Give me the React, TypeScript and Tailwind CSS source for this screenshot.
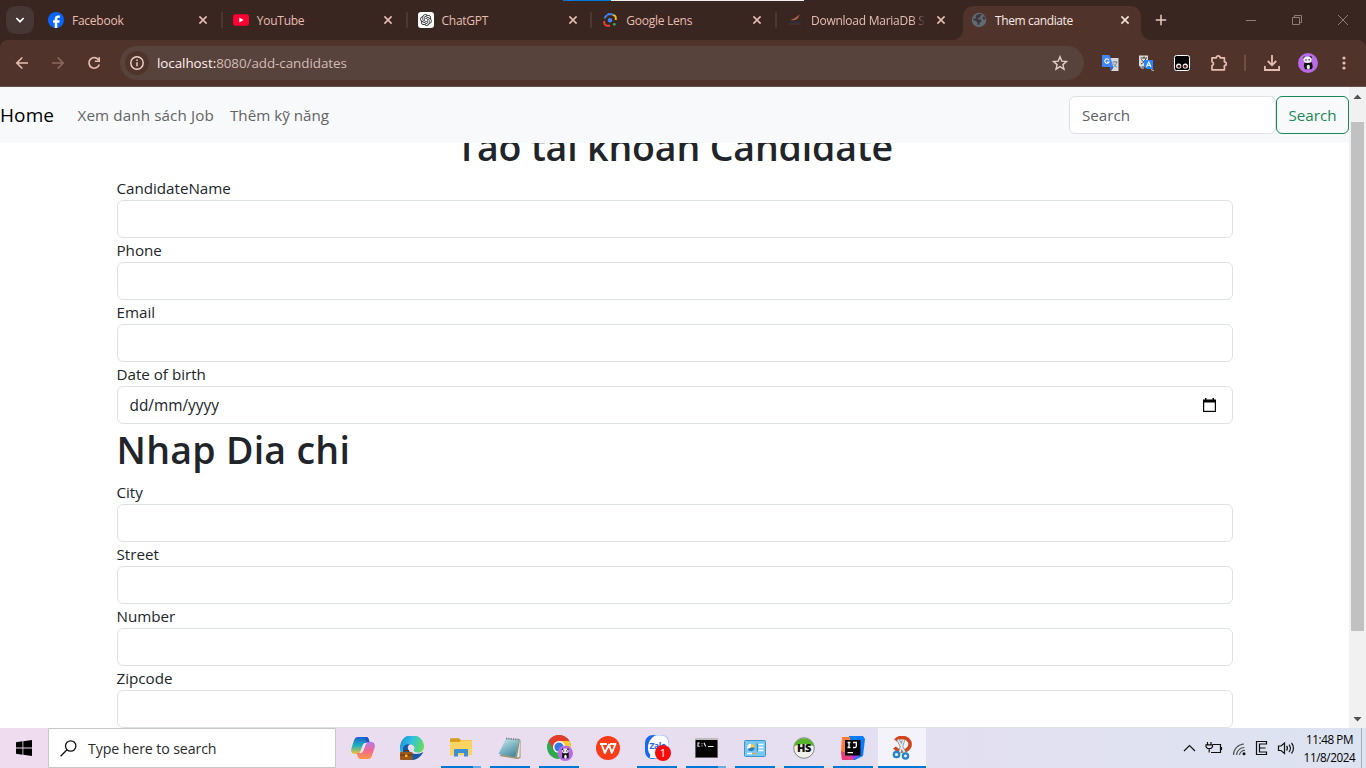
import type { ReactNode } from "react";
import { RiOpenaiFill } from "react-icons/ri";

/* ---------- Favicons ---------- */

const FacebookIcon = () => (
  <svg width="16" height="16" viewBox="0 0 16 16">
    <circle cx="8" cy="8" r="8" fill="#0866ff" />
    <path d="M6.700 16v-5.300H5V8.300h1.700V7.200c0-2.600 1.200-3.800 3.700-3.800.5 0 1.200.1 1.500.2v2.100c-.2 0-.5 0-.9 0-1.200 0-1.700.5-1.700 1.700v.9h2.400l-.4 2.400h-2V16z" fill="#fff" />
  </svg>
);

const YouTubeIcon = () => (
  <svg width="16" height="16" viewBox="0 0 16 16">
    <rect y="2.300" width="16" height="11.400" rx="2.600" fill="#ff0033" />
    <path d="M6.300 5.600v4.800L10.600 8z" fill="#fff" />
  </svg>
);

const ChatGptIcon = () => (
  <div className="flex h-4 w-4 items-center justify-center rounded-[3px] bg-white text-[#222]">
    <RiOpenaiFill size={14} />
  </div>
);

const LensIcon = () => (
  <svg width="14" height="14" viewBox="0 0 14 14" fill="none" strokeWidth="1.900">
    <path d="M1.800 5.500A3.500 3.500 0 0 1 4 2.300" stroke="#4285f4" />
    <path d="M4.200 2.200L5.300 1.200h3.500l1.200 1" stroke="#4285f4" />
    <path d="M10 2.100A3 3 0 0 1 12.800 5v2" stroke="#fbbc04" />
    <path d="M1.200 8v1.500A3.300 3.300 0 0 0 4.500 12.800H7" stroke="#ea4335" />
    <circle cx="7" cy="7.200" r="2.200" fill="#4285f4" />
    <circle cx="11.300" cy="11.300" r="1.400" fill="#34a853" />
  </svg>
);

const MariaIcon = () => (
  <svg width="14" height="14" viewBox="0 0 14 14">
    <path d="M2 7.200l4-1.600L9 3.500l2.800-2.300-1.600 3.500-1.700 1.900-2 .3-1 .9-.3-.9z" fill="#b5604c" />
    <path d="M1 8.300h11.500l-1 1.600H2.500z" fill="#2b2c40" />
    <path d="M.5 11h13" stroke="#55332f" strokeWidth="1" />
  </svg>
);

const GlobeIcon = () => (
  <svg width="16" height="16" viewBox="0 0 16 16">
    <circle cx="8" cy="8" r="7.200" fill="#5f6a73" />
    <path d="M8.300 1.800l2.500.6-.7 1.500-1.300.8-.4 1.300H6.500l.8 1.200 2.300.2 1 1.500-.9 1.400-1.200.8-.4 1.900-1.600-.3.1-2-1.400-1.500-2.900-1.300.1-1.600 1.700.4 1-.8-.5-1.300.8-1.500 1.500-.6z" fill="#40353a" />
    <path d="M11.500 5l1.800-.5 1 2-.8 1.200-1.700-.5z" fill="#40353a" />
  </svg>
);

const Close = ({ bright = false }: { bright?: boolean }) => (
  <svg width="10" height="10" viewBox="0 0 10 10" className="shrink-0">
    <path d="M1.400 1.400l7.200 7.200M8.600 1.400L1.400 8.600" stroke={bright ? "#f7e2dc" : "#e7bdb2"} strokeWidth="1.600" />
  </svg>
);

/* ---------- Browser chrome ---------- */

type TabData = { title: string; icon: ReactNode };

const tabs: TabData[] = [
  { title: "Facebook", icon: <FacebookIcon /> },
  { title: "YouTube", icon: <YouTubeIcon /> },
  { title: "ChatGPT", icon: <ChatGptIcon /> },
  { title: "Google Lens", icon: <LensIcon /> },
  { title: "Download MariaDB S", icon: <MariaIcon /> },
];

function TabStrip() {
  return (
    <div className="relative flex h-10 bg-[#392621] text-[12px] tracking-[-0.250px] text-[#e7bdb2]">
      <div className="absolute left-[563px] top-0 flex h-px w-[241px] bg-[#f0eeee]">
        <div className="w-12 bg-[#0078d7]" />
      </div>
      <div className="ml-1.5 mt-1.5 flex h-7 w-7 shrink-0 items-center justify-center rounded-[9px] bg-[#463734]">
        <svg width="10" height="8" viewBox="0 0 10 8">
          <path d="M1.300 2L5 5.700 8.700 2" fill="none" stroke="#fff" strokeWidth="1.700" />
        </svg>
      </div>
      <div className="ml-1 flex w-[924.500px]">
        {tabs.map((t, i) => (
          <div key={t.title} className="flex h-10 w-[184.750px] shrink-0 items-center pl-[10px]">
            <div className="flex w-4 shrink-0 justify-center">{t.icon}</div>
            <div
              className={
                i === 4
                  ? "ml-2 w-[117px] whitespace-nowrap pt-0.5 [mask-image:linear-gradient(to_right,black_86%,transparent_98%)]"
                  : "ml-2 w-[126px] whitespace-nowrap pt-0.5"
              }
            >
              {t.title}
            </div>
            <div className={i === 4 ? "ml-[8px] flex" : "flex"}>
              <Close />
            </div>
            {i < 4 && <div className="ml-auto h-4 w-0.5 bg-[#4a3835]" />}
          </div>
        ))}
      </div>
      <div className="relative ml-[0.500px] mt-1.5 flex h-[34px] w-[178px] items-center rounded-t-[10px] bg-[#50342c] pl-2 text-[#fbe9e4]">
        <svg width="10" height="10" className="absolute -left-[10px] bottom-0">
          <path d="M10 0v10H0A10 10 0 0 0 10 0" fill="#50342c" />
        </svg>
        <svg width="10" height="10" className="absolute -right-[10px] bottom-0">
          <path d="M0 0v10h10A10 10 0 0 1 0 0" fill="#50342c" />
        </svg>
        <div className="-mt-1.5"><GlobeIcon /></div>
        <div className="-mt-1 ml-2 w-[125px] tracking-[-0.380px]">Them candiate</div>
        <div className="-mt-1.5 flex"><Close bright /></div>
      </div>
      <svg width="12" height="12" viewBox="0 0 12 12" className="ml-[14px] mt-[14px]">
        <path d="M6 .8v10.400M.8 6h10.400" stroke="#e9cbc3" strokeWidth="1.500" />
      </svg>
      <div className="ml-auto mr-[18px] flex h-10 items-center gap-[36px]">
        <svg width="10" height="10"><path d="M0 5.500h10" stroke="#8e7c78" /></svg>
        <svg width="10" height="10" fill="none" stroke="#8e7c78">
          <path d="M.5 2.500h7v7h-7zM2.500 2.500v-2h7v7h-2" />
        </svg>
        <svg width="10" height="10"><path d="M0 0l10 10M10 0L0 10" stroke="#8e7c78" /></svg>
      </div>
    </div>
  );
}

function Panda({ size }: { size: number }) {
  return (
    <svg width={size} height={size} viewBox="0 0 20 20">
      <circle cx="10" cy="10" r="10" fill="#b76be4" />
      <path d="M6.500 9.500h7.500l.8 4.500-1.300 2.300H7L5.800 13z" fill="#111" />
      <circle cx="6.500" cy="4.600" r="1.200" fill="#222" />
      <circle cx="12.600" cy="4.200" r="1.200" fill="#222" />
      <ellipse cx="9.500" cy="6.800" rx="4" ry="3.200" fill="#eee" />
      <ellipse cx="10.300" cy="14" rx="1.600" ry="2.200" fill="#eee" />
      <circle cx="8" cy="7" r=".8" fill="#333" />
      <circle cx="11.200" cy="6.800" r=".8" fill="#333" />
    </svg>
  );
}

function Toolbar() {
  return (
    <div className="bg-[#392621]">
      <div className="flex h-[47px] items-center rounded-t-[8px] border-b border-[#66504a] bg-[#50342c]">
        <svg width="90" height="16" viewBox="0 0 90 16" fill="none" strokeWidth="1.600" className="ml-[15px] shrink-0">
          <path d="M13 8H2M7.300 2.500L1.800 8l5.500 5.500" stroke="#e7bdb2" />
          <path d="M37 8h11M42.700 2.500L48.200 8l-5.500 5.500" stroke="#8c6a62" />
          <path d="M83.500 4.700A5.300 5.300 0 1 0 84.300 9.500M84.200 2.200v4h-4.300" stroke="#e7bdb2" />
        </svg>
        <div className="ml-[15px] flex h-[34px] w-[964px] shrink-0 items-center rounded-full bg-[#57423c] pl-[5px] pr-4">
          <div className="flex h-6 w-6 items-center justify-center rounded-full bg-[#50342c]">
            <svg width="14" height="14" fill="none" stroke="#eed6cf" strokeWidth="1.400">
              <circle cx="7" cy="7" r="6.200" />
              <path d="M7 6.200v4M7 3.500v1.500" />
            </svg>
          </div>
          <div className="ml-2 pt-px text-[13.400px] tracking-[-0.050px] text-[#d3bdb6]">
            <span className="text-[#fff1ec]">localhost:</span>8080/add-candidates
          </div>
          <svg width="16" height="16" viewBox="0 0 16 16" className="ml-auto" fill="none" stroke="#e3cdc6" strokeWidth="1.400">
            <path d="M8 1.700l1.800 4.400 4.700.4-3.600 3.100 1.100 4.600L8 11.700l-4 2.500 1.100-4.600-3.600-3.100 4.700-.4z" />
          </svg>
        </div>
        <div className="ml-[18px] flex items-center">
          <svg width="17" height="16" viewBox="0 0 17 16">
            <path d="M7 3h9.500v13H9z" fill="#d7d9dc" />
            <path d="M0 0h7.500l4 12H1a1 1 0 0 1-1-1z" fill="#4285f4" />
            <path d="M8 12h3.500L9.500 16z" fill="#285fd0" />
            <path d="M7 5.200A2.200 2.200 0 1 0 7 7H5" fill="none" stroke="#fff" strokeWidth="1.100" />
            <path d="M10.500 7h5M13 6v1M14.800 7c-.5 2.500-2 4-3.300 5M11.500 8.500c1 2 2 3 3.500 3.700" fill="none" stroke="#5f7c8c" strokeWidth=".9" />
          </svg>
          <svg width="15" height="16" viewBox="0 0 15 16" className="ml-[20px]">
            <path d="M0 .5h9v11H1.500L0 11z" fill="#dddcd5" />
            <path d="M1.500 3h6.500M5 1.500V3M7 3.500C6 6 4 8 2 9M2.500 4.500C4 7 5 7.500 7 8" stroke="#333" strokeWidth=".9" fill="none" />
            <path d="M5 5h9v9H8l-3-2z" fill="#2684fc" />
            <path d="M7.500 12l2.200-5.200L12 12M8.300 10.300h3" stroke="#fff" strokeWidth="1.100" fill="none" />
            <path d="M2 10.500v2.500h3M12 14.500l3 1.300" stroke="#eee" strokeWidth=".8" fill="none" />
          </svg>
          <svg width="16" height="16" viewBox="0 0 16 16" className="ml-[20px]">
            <rect x=".5" y=".5" width="15" height="15" rx="2" fill="#000" stroke="#fff" />
            <circle cx="4.700" cy="11" r="2.600" fill="#fff" />
            <circle cx="11.300" cy="11" r="2.600" fill="#fff" />
            <circle cx="4.900" cy="11.200" r="1.500" fill="#501810" />
            <circle cx="11.100" cy="11.200" r="1.500" fill="#501810" />
          </svg>
          <svg width="18" height="18" viewBox="0 0 18 18" className="ml-[20px]" fill="none" stroke="#e7bdb2" strokeWidth="1.700">
            <path d="M2 3.800h4.300a1.900 1.900 0 0 1 3.800 0h4.300v4a1.900 1.900 0 0 1 0 3.800v4.200H2v-4.300a1.900 1.900 0 0 0 0-3.700z" strokeLinejoin="round" />
          </svg>
          <div className="ml-4 h-4 w-0.5 bg-[#724d44]" />
          <svg width="16" height="16" viewBox="0 0 16 16" className="ml-[18px]" fill="none" stroke="#e7bdb2" strokeWidth="1.800">
            <path d="M8 0v10M3.800 6L8 10.200 12.200 6M.9 11v4h14.200v-4" />
          </svg>
          <div className="ml-[18px]"><Panda size={20} /></div>
          <svg width="4" height="14" viewBox="0 0 4 14" className="ml-6" fill="#e7bdb2">
            <circle cx="2" cy="2" r="1.600" /><circle cx="2" cy="7" r="1.600" /><circle cx="2" cy="12" r="1.600" />
          </svg>
        </div>
      </div>
    </div>
  );
}

/* ---------- Page ---------- */

function Field({ label, date = false }: { label: string; date?: boolean }) {
  return (
    <div>
      <div className="h-6 text-[15.200px] leading-6 tracking-[-0.020px]">{label}</div>
      <div className="flex h-[38px] items-center justify-between rounded-md border border-[#dee2e6] pl-3 pr-4 text-[15.400px]">
        {date && (
          <>
            <span className="pt-0.5">dd/mm/yyyy</span>
            <svg width="13" height="15" viewBox="0 0 13 15">
              <path d="M0 1.500h13V14H0zM2 0h1.500v2H2zM9.500 0H11v2H9.500z" fill="#000" />
              <path d="M1.200 4.500h10.600v8.300H1.200z" fill="#fff" />
            </svg>
          </>
        )}
      </div>
    </div>
  );
}

function Page() {
  return (
    <div className="flex h-[641px] overflow-hidden bg-white text-[#212529]">
      <div className="w-[1349px]">
        <nav className="relative z-10 flex h-14 items-center bg-[#f8f9fa] text-[15.200px] text-[#636465]">
          <span className="w-[77.500px] pt-px text-[19px] tracking-[0.100px] text-black">Home</span>
          <span className="w-[152.500px] pt-px tracking-[0.120px]">Xem danh sách Job</span>
          <span className="pt-px">Thêm kỹ năng</span>
          <div className="ml-auto flex h-[38px] w-[207px] items-center rounded-md border border-[#dee2e6] bg-white pl-3 pt-px text-[#5c6166]">Search</div>
          <div className="flex h-[38px] w-[73px] items-center justify-center rounded-md border border-[#198754] pt-px text-[#198754]">Search</div>
        </nav>
        <main className="mx-auto w-[1116px]">
          <h1 className="-mt-[23px] mb-2 h-12 text-center text-[37.500px] font-semibold leading-[53px] tracking-[-0.150px]">Tao tai khoan Candidate</h1>
          <Field label="CandidateName" />
          <Field label="Phone" />
          <Field label="Email" />
          <Field label="Date of birth" date />
          <h1 className="mb-2 h-12 text-[37.500px] font-semibold leading-[52px] tracking-[0.270px]">Nhap Dia chi</h1>
          <Field label="City" />
          <Field label="Street" />
          <Field label="Number" />
          <Field label="Zipcode" />
        </main>
      </div>
      <div className="flex w-[17px] flex-col items-center bg-[#f1f1f1]">
        <svg width="9" height="5" className="mt-[7px] shrink-0"><path d="M0.500 5l4-4.500L8.500 5z" fill="#505050" /></svg>
        <div className="mt-[23px] h-[509px] w-[13px] bg-[#c1c1c1]" />
        <svg width="9" height="5" className="mb-[6px] mt-auto shrink-0"><path d="M0.500 0l4 4.500L8.500 0z" fill="#505050" /></svg>
      </div>
    </div>
  );
}

/* ---------- Taskbar ---------- */

const CopilotIcon = () => (
  <svg width="24" height="22" viewBox="0 0 24 22">
    <defs>
      <linearGradient id="cpA" x1="0" y1="0" x2="0" y2="1"><stop offset="0" stopColor="#1b5fd0" /><stop offset=".5" stopColor="#1bb0c0" /><stop offset="1" stopColor="#f2c52c" /></linearGradient>
      <linearGradient id="cpB" x1="0" y1="0" x2="0" y2="1"><stop offset="0" stopColor="#b07af0" /><stop offset=".5" stopColor="#f06a90" /><stop offset="1" stopColor="#ff9448" /></linearGradient>
    </defs>
    <path d="M7 0h8c2 0 2.500 1.500 3 3.500L18.800 6H15c-2 0-2.800 1-3.500 3L9.500 15c-.6 1.800-1.500 2-3 2H4c-3.500 0-4.500-2.500-3.500-6L3 3.500C3.800 1 5 0 7 0z" fill="url(#cpA)" />
    <path d="M17 22H9.500C7.500 22 7 20.500 6.400 18.500L5.700 16H9c2 0 2.800-1 3.500-3l2-6c.6-1.800 1.500-2 3-2H20c3.500 0 4.500 2.500 3.500 6L21 18.500c-.8 2.500-2 3.500-4 3.500z" fill="url(#cpB)" />
    <path d="M11.500 9c.7-2 1.500-3 3.500-3h1.500c-1 .3-1.500.8-2 2l-2 5c-.7 2-1.500 3-3.500 3H8c.8-.3 1.200-.7 1.500-1.500z" fill="#f3dff0" />
    <path d="M14 0h1c2 0 2.500 1.500 3 3.500L18.700 5h-2.200C15 5 14.500 3 14 0z" fill="#2350c8" />
  </svg>
);

const EdgeIcon = () => (
  <svg width="24" height="24" viewBox="0 0 24 24">
    <defs>
      <linearGradient id="edA" x1="0" y1="0" x2="1" y2=".4"><stop offset="0" stopColor="#1888d8" /><stop offset=".5" stopColor="#31c2df" /><stop offset="1" stopColor="#65dc58" /></linearGradient>
    </defs>
    <path d="M0 12A12 12 0 0 1 24 10c0 4.500-3 6.500-6 6.500-3.300 0-5-1-4-3 1.500-2.500-1-5.500-4.500-5C5 9 5 17 9 24 3 23 0 18 0 12z" fill="url(#edA)" />
    <path d="M3 13c0-4 4-5.500 7-4.500-2.500 1-3 4-1 6.500 3 3.500 9 4 14.500 1C20 22 15.500 24.500 11 24c-4-.8-8-5-8-11z" fill="#1558a8" />
    <rect y="16" width="12.500" height="8" rx="1" fill="#9b5718" />
    <path d="M4 16v-1.500h4.500V16M0 19h12.500" stroke="#5f310c" fill="none" />
    <rect x="5" y="18.500" width="2.500" height="2.500" fill="#f6b529" />
  </svg>
);

const FolderIcon = () => (
  <svg width="22" height="20" viewBox="0 0 22 20">
    <path d="M0 2.500V1.500C0 .7.500.3 1 .3h8L10.500 2H21a1 1 0 0 1 1 1v14H0z" fill="#d79b18" />
    <path d="M0 4l10-.3 1-1.400h11v15H0z" fill="#fcd462" />
    <path d="M4 18.500V12a1 1 0 0 1 1-1h12a1 1 0 0 1 1 1v6.500h-4V15H8v3.500z" fill="#3b8fd6" />
  </svg>
);

const NotepadIcon = () => (
  <svg width="24" height="22" viewBox="0 0 24 22">
    <defs><linearGradient id="npA" x1="0" y1="0" x2=".6" y2="1"><stop offset="0" stopColor="#d0edf2" /><stop offset="1" stopColor="#468ba0" /></linearGradient></defs>
    <path d="M21 2l1.500 1v18l-3 1L1.500 19z" fill="#9b9478" />
    <path d="M22 3l-3 17.500L21.500 20z" fill="#eee" />
    <path d="M8 1.500L21.500 2.500 17 20 .5 17z" fill="url(#npA)" />
    <path d="M8 1.500l13.500 1" stroke="#717b80" strokeWidth="1.600" strokeDasharray="1.300 1" />
  </svg>
);

const ChromeIcon = () => (
  <svg width="26" height="26" viewBox="0 0 26 26" className="ml-0.5">
    <circle cx="12" cy="12" r="12" fill="#2fa950" />
    <path d="M1.600 6A12 12 0 0 1 22.400 6L12 12z" fill="#e33b2e" />
    <path d="M1.600 6L6.800 15 12 12V6z" fill="#e33b2e" />
    <path d="M22.400 6A12 12 0 0 1 12 24l5.200-9L12 6z" fill="#fcc934" />
    <circle cx="12" cy="12" r="6" fill="#fff" />
    <circle cx="12" cy="12" r="4.600" fill="#3478e5" />
    <svg x="10.500" y="10.500" width="15.500" height="15.500" viewBox="0 0 20 20">
      <circle cx="10" cy="10" r="10" fill="#b76be4" />
      <path d="M6 9h8.500v7.500H6z" fill="#151515" />
      <ellipse cx="10" cy="7" rx="4" ry="3" fill="#eee" />
      <ellipse cx="10.300" cy="14.500" rx="1.700" ry="2.500" fill="#eee" />
      <circle cx="8" cy="7" r=".8" /><circle cx="12" cy="7" r=".8" /><circle cx="6.500" cy="4.800" r="1" /><circle cx="13.500" cy="4.800" r="1" />
    </svg>
  </svg>
);

const WpsIcon = () => (
  <svg width="24" height="24" viewBox="0 0 24 24">
    <circle cx="12" cy="12" r="12" fill="#fb3a18" />
    <path d="M4 8h7M5.500 8l3.300 9L13 8.500l2.800 8.500L19.500 8H14" fill="none" stroke="#fff" strokeWidth="1.900" strokeLinejoin="round" />
  </svg>
);

const ZaloIcon = () => (
  <svg width="26" height="26" viewBox="0 0 26 26" className="ml-0.5">
    <path d="M9 0h7c5.500 0 8 3 8 8v7.500c0 5.500-3 8.500-8.500 8.500H9c-6 0-9-3-9-9V9C0 3 3.500 0 9 0z" fill="#8db8fb" />
    <path d="M9 0C3.500 0 0 3 0 9v6c0 6 3 9 9 9l2-3V0z" fill="#1769f5" />
    <path d="M10 .5h6.500C21 .5 23.500 4 23.500 9v6c0 5-3 8-8 8H10c-2.500 0-4 .2-5.500-.5 1-1 1-2 .5-3C1.500 15 2 5 10 .5z" fill="#fff" />
    <text x="4.500" y="14" fontSize="8.500" fontWeight="700" letterSpacing="-.4" fill="#1769f5" fontFamily="Open Sans, sans-serif">Zalo</text>
    <circle cx="18" cy="18" r="8" fill="#f80b0b" />
    <text x="18" y="22" fontSize="11" textAnchor="middle" fill="#fff" fontFamily="Open Sans, sans-serif">1</text>
  </svg>
);

const CmdIcon = () => (
  <svg width="23" height="20" viewBox="0 0 23 20">
    <rect width="23" height="20" fill="#8c8c8c" />
    <rect y="0" width="23" height="2.500" fill="#bcbcbc" />
    <rect x=".7" y="2" width="21.600" height="17.300" fill="#050505" />
    <path d="M4.700 5H3v3.200h1.700M6.500 5.700h.9M6.500 8h.9M9 4.800l1.700 3.700M13 8.500h5.500" stroke="#eee" strokeWidth="1.100" fill="none" />
  </svg>
);

const PanelIcon = () => (
  <svg width="22" height="17" viewBox="0 0 22 17">
    <rect x=".5" y=".5" width="21" height="16" rx="1" fill="#76c8f2" stroke="#3e94c4" />
    <circle cx="7" cy="7.500" r="3.800" fill="#fff" />
    <path d="M7 7.500V3.700A3.800 3.800 0 1 1 3.500 9z" fill="#2d7dbd" />
    <path d="M7 7.500V3.700A3.800 3.800 0 0 1 10.800 7.500z" fill="#ffcb3b" />
    <path d="M14.500 4.500h5M14.500 7.500h5M14.500 10.500h5M3 13.500h5" stroke="#fff" strokeWidth="1.300" />
    <path d="M13.300 3.500v8" stroke="#2d7dbd" />
    <path d="M9 13.500h3" stroke="#f4a12c" strokeWidth="1.500" />
  </svg>
);

const HsIcon = () => (
  <svg width="22" height="22" viewBox="0 0 22 22">
    <circle cx="11" cy="11" r="10.300" fill="#f0f0ec" stroke="#848a80" />
    <path d="M1 9.500a10.200 10.200 0 0 1 20 0C16 6 6 6 1 9.500z" fill="#56b52c" />
    <text x="11" y="15.200" fontSize="11" fontWeight="800" letterSpacing="-.3" textAnchor="middle" fill="#111" fontFamily="Open Sans, sans-serif">HS</text>
  </svg>
);

const IdeaIcon = () => (
  <svg width="24" height="24" viewBox="0 0 24 24">
    <path d="M8 0h14l2 3-2 17-8 4H5z" fill="#087cfa" />
    <path d="M1 1h8v11l4 12H1L0 15z" fill="#fd7c3c" />
    <path d="M0 15l1 9h11l-3-6z" fill="#e8407d" />
    <path d="M12 24l-3-6h11z" fill="#9b3fe0" />
    <rect x="4" y="4" width="15.500" height="15.500" fill="#000" />
    <path d="M6.500 6.500h3M8 6.500v5M6.500 11.500h3M12 6.500h3.300v3.500c0 1.200-.8 1.800-1.800 1.500H12M6.500 16.700h5.500" stroke="#fff" strokeWidth="1.300" fill="none" />
  </svg>
);

const SnipIcon = () => (
  <svg width="22" height="24" viewBox="0 0 22 24" fill="none" className="ml-0.5">
    <path d="M3.500 4.500C7 0 15 .5 17.500 5.500c2 4.500-1.500 9-6 9.500-4 .4-7-1-9-3.500" stroke="#cf4520" strokeWidth="3.600" />
    <path d="M6 3.500l7 14M11.500 4L7.500 17" stroke="#828d94" strokeWidth="3.200" />
    <path d="M6 3.500l7 14M11.500 4L7.500 17" stroke="#e3e7e9" strokeWidth="1.700" />
    <circle cx="4.500" cy="18.500" r="2.700" stroke="#2684c7" strokeWidth="2.300" />
    <circle cx="13.500" cy="20" r="2.600" stroke="#2684c7" strokeWidth="2.300" />
  </svg>
);

type Slot = { icon: ReactNode; run?: boolean; split?: boolean; active?: boolean };

const slots: Slot[] = [
  { icon: <CopilotIcon /> },
  { icon: <EdgeIcon /> },
  { icon: <FolderIcon />, run: true, split: true },
  { icon: <NotepadIcon />, run: true },
  { icon: <ChromeIcon />, run: true },
  { icon: <WpsIcon /> },
  { icon: <ZaloIcon />, run: true },
  { icon: <CmdIcon />, run: true, split: true },
  { icon: <PanelIcon />, run: true },
  { icon: <HsIcon />, run: true },
  { icon: <IdeaIcon />, run: true },
  { icon: <SnipIcon />, run: true, active: true },
];

function Taskbar() {
  return (
    <div className="flex h-10 bg-linear-to-r from-[#efdcef] via-[#e7def0] to-[#dce3f1] text-black">
      <div className="flex w-12 items-center justify-center">
        <svg width="16" height="16" viewBox="0 0 16 16">
          <path d="M0 2.200L6.500 1.300V7.500H0zM7.300 1.200L16 0v7.500H7.300zM0 8.400h6.500v6.300L0 13.800zM7.300 8.400H16V16l-8.700-1.200z" />
        </svg>
      </div>
      <div className="flex w-[288px] items-center border border-[#c9c5ca] bg-white pl-[11px]">
        <svg width="17" height="17" viewBox="0 0 17 17" fill="none" stroke="#111" strokeWidth="1.300">
          <circle cx="10.700" cy="6" r="5.200" />
          <path d="M7 9.800L.6 16.200" />
        </svg>
        <span className="ml-[11px] pt-0.5 text-[14.200px] tracking-[-0.110px] text-[#2b2b2b]">Type here to search</span>
      </div>
      <div className="ml-[3px] flex gap-px">
        {slots.map((s, i) => (
          <div key={i} className={s.active ? "flex h-10 w-12 flex-col items-center bg-[#f4f3fa]" : "flex h-10 w-12 flex-col items-center"}>
            <div className="flex h-[38px] items-center pt-0.5">{s.icon}</div>
            {s.run && (
              <div className={s.active ? "flex h-0.5 w-12 bg-[#0078d7]" : "flex h-0.5 w-10 bg-[#0078d7]"}>
                {s.split && <div className="ml-auto w-2 bg-[#68abe3]" />}
              </div>
            )}
          </div>
        ))}
      </div>
      <div className="ml-auto flex items-center">
        <svg width="112" height="20" viewBox="0 0 112 20" fill="none" stroke="#111" strokeWidth="1.200">
          <path d="M1 13l5.500-5.500L12 13" />
          <path d="M30 6.500h7.500v8H28M38.500 9v3M24.500 4v3M28 4v3M23 6.800h6.500v2L28 10.500h-3.500L23 8.800zM26.200 10.500v4" />
          <path d="M50.500 17A11 11 0 0 1 61 6M53.500 17A8 8 0 0 1 61.500 9.500M56.500 17A5 5 0 0 1 62 12.500" stroke="#555" />
          <circle cx="61" cy="15.800" r="1.500" fill="#111" stroke="none" />
          <path d="M83.500 3.500H73.500v13H83.500v-2.500H76.500V6H83.500zM77 10h5.500" />
          <path d="M95.500 8v4.500h2.500l3.500 3V5l-3.500 3zM103.500 8a3.500 3.500 0 0 1 0 4.500M106 6.500a6 6 0 0 1 0 7.500M108.500 5a8 8 0 0 1 0 10.500" />
        </svg>
        <div className="ml-2 -mt-px w-[53px] text-center text-[11.700px] leading-[18px] tracking-[-0.400px] whitespace-nowrap">
          <div>11:48 PM</div>
          <div>11/8/2024</div>
        </div>
        <div className="ml-[5px] mr-1 h-10 w-px bg-[#a8aeba]" />
      </div>
    </div>
  );
}

export default function App() {
  return (
    <div className="h-[768px] w-[1366px] overflow-hidden font-['Open_Sans','Noto_Sans',sans-serif]">
      <TabStrip />
      <Toolbar />
      <Page />
      <Taskbar />
    </div>
  );
}
